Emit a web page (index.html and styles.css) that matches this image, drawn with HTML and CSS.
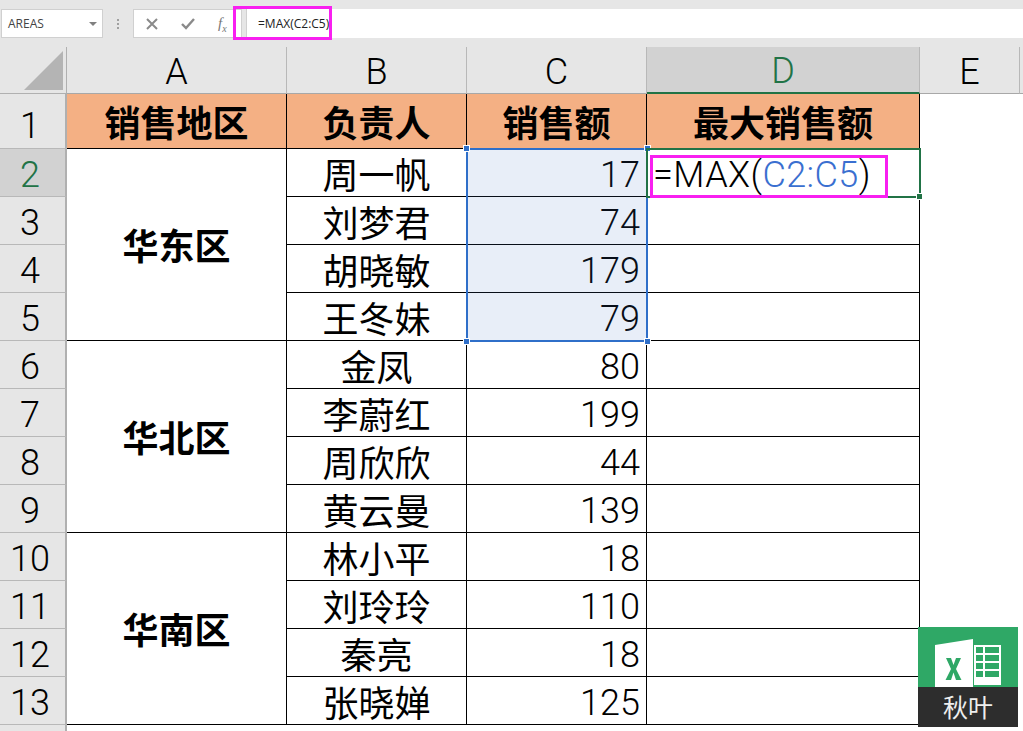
FILE: index.html
```html
<!DOCTYPE html>
<html lang="zh-CN">
<head>
    <meta charset="UTF-8">
    <title>MAX</title>
    <link rel="stylesheet" href="styles.css">
</head>
<body>
    <div class="topbar">
        <div class="namebox">
            <span>AREAS</span>
            <svg class="caret" width="8" height="4" viewBox="0 0 8 4"><path d="M0 0h8L4 4z" fill="#808080"/></svg>
        </div>
        <div class="grip"><i></i><i></i><i></i></div>
        <div class="fx-buttons">
            <svg width="12" height="12" viewBox="0 0 12 12"><path d="M1 1l10 10M11 1L1 11" stroke="#8a8a8a" stroke-width="2" fill="none"/></svg>
            <svg width="14" height="12" viewBox="0 0 14 12"><path d="M1 6l4 4 8-9" stroke="#8a8a8a" stroke-width="2.400" fill="none"/></svg>
            <span class="fx">f<sub>x</sub></span>
        </div>
        <div class="fx-input">
            <span class="formula-text">=MAX(C2:C5)</span>
        </div>
        <div class="pink-box formula-mark"></div>
    </div>

    <div class="sheet">
        <div class="corner"><svg width="39" height="39" viewBox="0 0 39 39"><path d="M39 0v39H0z" fill="#b4b4b4"/></svg></div>
        <div class="col-head">A</div>
        <div class="col-head">B</div>
        <div class="col-head">C</div>
        <div class="col-head active">D</div>
        <div class="col-head">E</div>
        <div class="col-head"></div>

        <div class="row-head first">1</div>
        <div class="cell title">销售地区</div>
        <div class="cell title">负责人</div>
        <div class="cell title">销售额</div>
        <div class="cell title">最大销售额</div>

        <div class="row-head active">2</div>
        <div class="cell region">华东区</div>
        <div class="cell">周一帆</div>
        <div class="cell num">17</div>
        <div class="cell formula-cell">=MAX(<span class="ref">C2:C5</span>)</div>

        <div class="row-head">3</div>
        <div class="cell">刘梦君</div>
        <div class="cell num">74</div>
        <div class="cell"></div>

        <div class="row-head">4</div>
        <div class="cell">胡晓敏</div>
        <div class="cell num">179</div>
        <div class="cell"></div>

        <div class="row-head">5</div>
        <div class="cell">王冬妹</div>
        <div class="cell num">79</div>
        <div class="cell"></div>

        <div class="row-head">6</div>
        <div class="cell region">华北区</div>
        <div class="cell">金凤</div>
        <div class="cell num">80</div>
        <div class="cell"></div>

        <div class="row-head">7</div>
        <div class="cell">李蔚红</div>
        <div class="cell num">199</div>
        <div class="cell"></div>

        <div class="row-head">8</div>
        <div class="cell">周欣欣</div>
        <div class="cell num">44</div>
        <div class="cell"></div>

        <div class="row-head">9</div>
        <div class="cell">黄云曼</div>
        <div class="cell num">139</div>
        <div class="cell"></div>

        <div class="row-head">10</div>
        <div class="cell region">华南区</div>
        <div class="cell">林小平</div>
        <div class="cell num">18</div>
        <div class="cell"></div>

        <div class="row-head">11</div>
        <div class="cell">刘玲玲</div>
        <div class="cell num">110</div>
        <div class="cell"></div>

        <div class="row-head">12</div>
        <div class="cell">秦亮</div>
        <div class="cell num">18</div>
        <div class="cell"></div>

        <div class="row-head">13</div>
        <div class="cell">张晓婵</div>
        <div class="cell num">125</div>
        <div class="cell"></div>

        <div class="row-head tail"></div>

        <!-- selection drawn on a second grid with the same tracks -->
        <div class="sheet-grid overlay">
            <div class="range">
                <i class="handle tl"></i><i class="handle tr"></i><i class="handle bl"></i><i class="handle br"></i>
            </div>
            <div class="active-cell"><i class="fill-handle"></i></div>
        </div>
        <div class="pink-box cell-mark"></div>
    </div>

    <div class="logo">
        <div class="logo-top">
            <svg width="100" height="60" viewBox="0 0 100 60">
                <path d="M17 18L55 12V60H17z" fill="#fff"/>
                <path d="M56 18H83V58H56z" fill="#fff"/>
                <path d="M58 20h7v6h-7zM67 20h14v6H67zM58 28h7v6h-7zM67 28h14v6H67zM58 36h7v6h-7zM67 36h14v6H67zM58 44h7v6h-7zM67 44h14v6H67z" fill="#2fa866"/>
                <path d="M28 31h5l2.500 7 2.500-7h5l-5 11 5.500 11h-5.500l-2.500-7.500-2.500 7.500h-5.500l5.500-11z" fill="#2fa866"/>
            </svg>
        </div>
        <div class="logo-name">秋叶</div>
    </div>
</body>
</html>
```

FILE: styles.css
```css
html, body {
    margin: 0;
    padding: 0;
    height: 731px;
    overflow: hidden;
    background: #fff;
    font-family: Roboto, "Noto Sans CJK SC", sans-serif;
}

/* formula bar */
.topbar {
    position: relative;
    height: 47px;
    box-sizing: border-box;
    padding: 9px 0 9px 1px;
    display: flex;
    background: #e6e6e6;
    font-family: "Open Sans", sans-serif;
}

.namebox {
    width: 102px;
    box-sizing: border-box;
    background: #fff;
    border: 1px solid #d0d0d0;
    padding: 0 5px 0 6px;
    display: flex;
    align-items: center;
    justify-content: space-between;
    font-size: 12px;
    color: #444;
}

.grip {
    width: 30px;
    display: flex;
    flex-direction: column;
    align-items: center;
    justify-content: center;
    gap: 2px;
}

.grip i {
    width: 2px;
    height: 2px;
    background: #a0a0a0;
}

.fx-buttons {
    width: 109px;
    box-sizing: border-box;
    background: #fff;
    border: 1px solid #d0d0d0;
    display: flex;
    align-items: center;
    gap: 23px;
    padding-left: 12px;
}

.fx {
    font-family: "Liberation Serif", serif;
    font-style: italic;
    font-size: 15px;
    color: #777;
}

.fx sub {
    font-size: 10px;
    line-height: 0;
}

.fx-input {
    flex: 1;
    margin-left: 4px;
    background: #fff;
    border-left: 1px solid #d0d0d0;
    display: flex;
    align-items: center;
    padding-left: 11px;
    font-size: 12px;
    color: #222;
}

.pink-box {
    position: absolute;
    box-sizing: border-box;
    border: 3px solid #f81ff0;
}

.formula-mark {
    left: 233px;
    top: 6px;
    width: 99px;
    height: 34px;
}

/* sheet */
.sheet,
.sheet-grid {
    display: grid;
    grid-template-columns: 67px 220px 180px 180px 273px 100px 20px;
    grid-template-rows: 47px 55px repeat(12, 48px) 7px;
}

.sheet {
    position: relative;
    font-size: 36px;
    color: #000;
}

.overlay {
    position: absolute;
    left: 0;
    top: 0;
}

.corner {
    background: #e6e6e6;
    border-right: 1px solid #b0b0b0;
    border-bottom: 1px solid #b0b0b0;
    display: flex;
    align-items: flex-end;
    justify-content: flex-end;
    padding: 0 3px 3px 0;
    box-sizing: border-box;
}

.col-head {
    background: #e6e6e6;
    border-right: 1px solid #b8b8b8;
    border-bottom: 1px solid #a8a8a8;
    box-sizing: border-box;
    display: flex;
    align-items: center;
    justify-content: center;
    font-weight: 300;
    padding-top: 3px;
}

.col-head.active {
    background: #d2d2d2;
    color: #217346;
    border-bottom: 2px solid #217346;
}

.row-head {
    grid-column: 1;
    background: #e6e6e6;
    border-right: 2px solid #b0b0b0;
    border-bottom: 1px solid #b8b8b8;
    box-sizing: border-box;
    display: flex;
    align-items: center;
    justify-content: center;
    font-weight: 300;
    padding: 5px 5px 0 0;
}

.row-head.first {
    padding-top: 9px;
}

.row-head.active {
    background: #d2d2d2;
    color: #217346;
}

.row-head.tail {
    border-bottom: 0;
}

.cell {
    border-right: 1px solid #000;
    border-bottom: 1px solid #000;
    box-sizing: border-box;
    display: flex;
    align-items: center;
    justify-content: center;
    white-space: nowrap;
}

.title {
    background: #f4b084;
    font-weight: bold;
}

.region {
    font-weight: bold;
    grid-row-end: span 4;
    padding-bottom: 2px;
}

.num {
    justify-content: flex-end;
    padding: 4px 6px 0 0;
    font-weight: 300;
}

.formula-cell {
    justify-content: flex-start;
    padding: 5px 0 0 6px;
    font-weight: 300;
    letter-spacing: 0.4px;
}

.ref {
    color: #3a6fd0;
}

/* selection */
.range {
    grid-column: 4;
    grid-row: 3 / 7;
    margin: -1px -1px -1px -1px;
    border: 2px solid #2f6fc9;
    background: rgba(68, 114, 196, 0.12);
    position: relative;
}

.handle {
    position: absolute;
    width: 5px;
    height: 5px;
    background: #2f6fc9;
    border: 1px solid #fff;
}

.tl { left: -5px; top: -5px; }
.tr { right: -5px; top: -5px; }
.bl { left: -5px; bottom: -5px; }
.br { right: -5px; bottom: -5px; }

.active-cell {
    grid-column: 5;
    grid-row: 3;
    margin: -1px -1px -1px -1px;
    border: 2px solid #217346;
    position: relative;
}

.fill-handle {
    position: absolute;
    right: -4px;
    bottom: -4px;
    width: 5px;
    height: 5px;
    background: #217346;
    border: 1px solid #fff;
}

.cell-mark {
    left: 650px;
    top: 108px;
    width: 238px;
    height: 43px;
}

/* watermark */
.logo {
    position: absolute;
    left: 918px;
    top: 627px;
    width: 100px;
    height: 100px;
    display: flex;
    flex-direction: column;
}

.logo-top {
    height: 60px;
    background: #2fa866;
    overflow: hidden;
}

.logo-top svg {
    display: block;
}

.logo-name {
    flex: 1;
    background: #2d2d2d;
    color: #eee;
    font-size: 25px;
    line-height: 38px;
    text-align: center;
    font-family: "Noto Sans CJK SC", sans-serif;
}
```
